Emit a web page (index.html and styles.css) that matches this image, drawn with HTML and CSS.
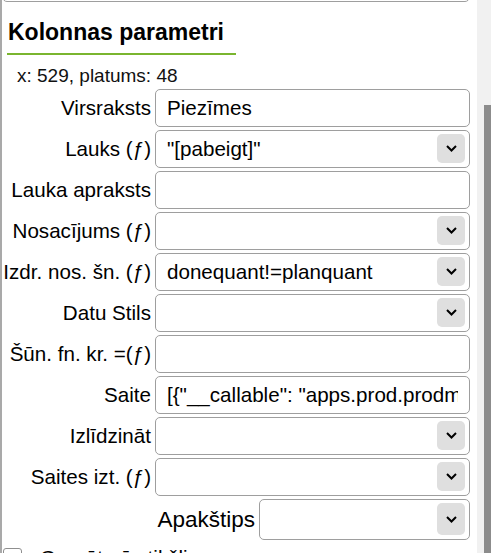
FILE: index.html
```html
<!DOCTYPE html>
<html lang="lv">
<head>
  <meta charset="UTF-8" />
  <meta name="viewport" content="width=device-width, initial-scale=1.0"/>
  <title>Kolonnas parametri</title>
  <link rel="stylesheet" href="styles.css">
</head>
<body>
  <div class="layout">
    <div class="panel">
      <div class="prev-row">
        <input type="text" class="field prev-field">
      </div>

      <h2 class="section-title">Kolonnas parametri</h2>
      <div class="info">x: 529, platums: 48</div>

      <div class="params">
        <label>Virsraksts</label>
        <input type="text" class="field" value="Piezīmes">

        <label>Lauks (ƒ)</label>
        <div class="select">
          <span class="value">"[pabeigt]"</span>
          <span class="arrow"><svg width="11" height="7" viewBox="0 0 11 7"><path d="M1 1 L5.5 5.5 L10 1" fill="none" stroke="#000" stroke-width="2"/></svg></span>
        </div>

        <label>Lauka apraksts</label>
        <input type="text" class="field">

        <label>Nosacījums (ƒ)</label>
        <div class="select">
          <span class="value"></span>
          <span class="arrow"><svg width="11" height="7" viewBox="0 0 11 7"><path d="M1 1 L5.5 5.5 L10 1" fill="none" stroke="#000" stroke-width="2"/></svg></span>
        </div>

        <label>Izdr. nos. šn. (ƒ)</label>
        <div class="select">
          <span class="value">donequant!=planquant</span>
          <span class="arrow"><svg width="11" height="7" viewBox="0 0 11 7"><path d="M1 1 L5.5 5.5 L10 1" fill="none" stroke="#000" stroke-width="2"/></svg></span>
        </div>

        <label>Datu Stils</label>
        <div class="select">
          <span class="value"></span>
          <span class="arrow"><svg width="11" height="7" viewBox="0 0 11 7"><path d="M1 1 L5.5 5.5 L10 1" fill="none" stroke="#000" stroke-width="2"/></svg></span>
        </div>

        <label>Šūn. fn. kr. =(ƒ)</label>
        <input type="text" class="field">

        <label>Saite</label>
        <input type="text" class="field" value='[{"__callable": "apps.prod.prodman.views.open_task", "args": []}]'>

        <label>Izlīdzināt</label>
        <div class="select">
          <span class="value"></span>
          <span class="arrow"><svg width="11" height="7" viewBox="0 0 11 7"><path d="M1 1 L5.5 5.5 L10 1" fill="none" stroke="#000" stroke-width="2"/></svg></span>
        </div>

        <label>Saites izt. (ƒ)</label>
        <div class="select">
          <span class="value"></span>
          <span class="arrow"><svg width="11" height="7" viewBox="0 0 11 7"><path d="M1 1 L5.5 5.5 L10 1" fill="none" stroke="#000" stroke-width="2"/></svg></span>
        </div>
      </div>

      <div class="subtype-row">
        <label>Apakštips</label>
        <div class="select subtype">
          <span class="value"></span>
          <span class="arrow"><svg width="11" height="7" viewBox="0 0 11 7"><path d="M1 1 L5.5 5.5 L10 1" fill="none" stroke="#000" stroke-width="2"/></svg></span>
        </div>
      </div>

      <div class="check-row">
        <input type="checkbox" id="group">
        <label for="group">Grupēt pēc tikšļiem</label>
      </div>
    </div>

    <div class="scrollbar">
      <div class="thumb"></div>
    </div>
  </div>
</body>
</html>
```

FILE: styles.css
```css
* {
  box-sizing: border-box;
  margin: 0;
  padding: 0;
}

body {
  font-family: 'Liberation Sans', Arial, sans-serif;
  font-size: 20.6px;
  color: #000;
  background: #fff;
  overflow: hidden;
}

.layout {
  display: flex;
  height: 100vh;
}

.panel {
  flex: 1;
  min-width: 0;
  border-left: 2px solid #a9a9a9;
  padding-right: 7px;
  overflow: hidden;
}

.prev-row {
  display: flex;
  justify-content: flex-end;
  margin-top: -36px;
}

.prev-field {
  width: 280px;
}

.section-title {
  width: fit-content;
  margin: 17px 0 0 5px;
  padding: 0 12px 8px 1px;
  font-size: 23px;
  line-height: 26px;
  font-weight: bold;
  border-bottom: 2px solid #7ab52f;
}

.info {
  margin-top: 10px;
  padding-left: 15px;
  font-size: 19px;
  line-height: 22px;
  color: #111;
}

.params {
  display: grid;
  grid-template-columns: 149px 1fr;
  column-gap: 4px;
  row-gap: 3px;
  margin-top: 2px;
}

.params label {
  align-self: center;
  text-align: right;
  white-space: nowrap;
}

.field,
.select {
  height: 38px;
  border: 1px solid #9e9e9e;
  border-radius: 5px;
  background: #fff;
  font-family: inherit;
  font-size: 20.6px;
  color: #000;
}

.field {
  width: 100%;
  padding: 0 11px;
  outline: none;
}

.select {
  display: flex;
  overflow: hidden;
}

.select .value {
  flex: 1;
  display: flex;
  align-items: center;
  padding-left: 11px;
  white-space: nowrap;
  overflow: hidden;
}

.select .arrow {
  width: 28px;
  margin: 3px 4px 4px 0;
  background: #dfdfdf;
  border-radius: 5px;
  display: flex;
  align-items: center;
  justify-content: center;
}

.subtype-row {
  display: flex;
  justify-content: flex-end;
  align-items: center;
  gap: 4px;
  margin-top: 3px;
}

.subtype-row label {
  font-size: 22.5px;
}

.select.subtype {
  width: 211px;
  height: 41px;
}

.check-row {
  display: flex;
  align-items: flex-start;
  gap: 18px;
  margin-top: 8px;
  padding-left: 1px;
}

.check-row input {
  appearance: none;
  width: 19px;
  height: 19px;
  border: 1px solid #8f8f8f;
  border-radius: 3px;
  background: #fff;
}

.check-row label {
  margin-top: -2px;
}

.scrollbar {
  width: 14px;
  flex-shrink: 0;
  background: #f1f1f1;
}

.thumb {
  height: 600px;
  margin: 105px 0 0 7px;
  background: #8c8c8c;
}
```
